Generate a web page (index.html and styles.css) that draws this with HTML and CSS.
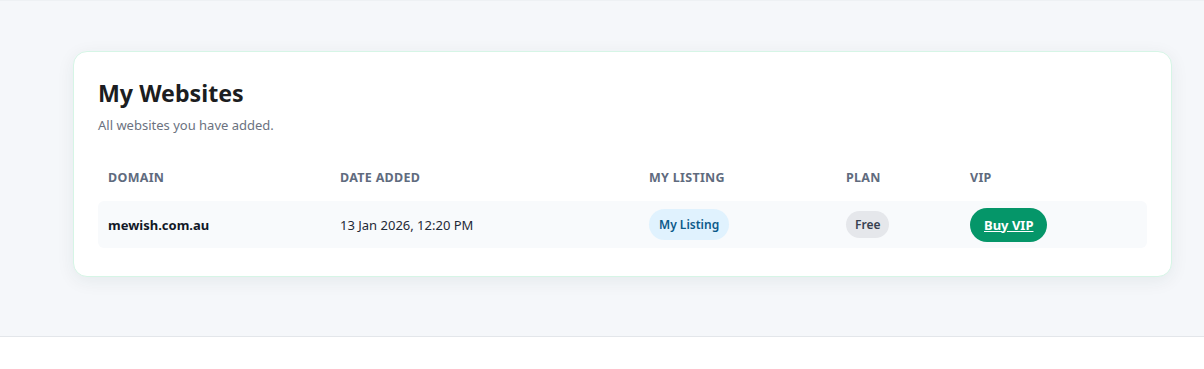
FILE: index.html
```html
<!DOCTYPE html>
<html lang="en">
<head>
    <meta charset="UTF-8">
    <meta name="viewport" content="width=device-width, initial-scale=1.0">
    <title>My Websites</title>
    <link rel="stylesheet" href="styles.css">
</head>
<body>
    <div class="page">
        <div class="card">
            <h1>My Websites</h1>
            <p class="subtitle">All websites you have added.</p>
            <table class="sites">
                <thead>
                    <tr>
                        <th class="col-domain">Domain</th>
                        <th class="col-date">Date Added</th>
                        <th class="col-listing">My Listing</th>
                        <th class="col-plan">Plan</th>
                        <th>VIP</th>
                    </tr>
                </thead>
                <tbody>
                    <tr>
                        <td class="domain">mewish.com.au</td>
                        <td>13 Jan 2026, 12:20 PM</td>
                        <td><span class="badge badge-listing">My Listing</span></td>
                        <td><span class="badge badge-plan">Free</span></td>
                        <td><a href="#" class="btn-vip">Buy VIP</a></td>
                    </tr>
                </tbody>
            </table>
        </div>
    </div>
    <div class="footer-space"></div>
</body>
</html>
```

FILE: styles.css
```css
body {
    margin: 0;
    font-family: "Segoe UI", "Noto Sans", sans-serif;
    background-color: #fff;
    color: #111827;
}
.page {
    background-color: #f5f7fa;
    border-top: 1px solid #eef1f4;
    border-bottom: 1px solid #e3e6ea;
    padding: 50px 32px 59px 73px;
}
.card {
    background-color: #fff;
    border: 1px solid #d6f5e6;
    border-radius: 14px;
    box-shadow: 0 4px 18px rgba(15, 60, 50, 0.07);
    padding: 24px 24px 28px 24px;
}
.card h1 {
    margin: 1px 0 0 0;
    font-size: 23.2px;
    line-height: 32px;
    font-weight: 700;
    color: #1c1d21;
}
.subtitle {
    margin: 7px 0 0 0;
    font-size: 13px;
    line-height: 18px;
    color: #6b7280;
}
.sites {
    width: 100%;
    border-collapse: separate;
    border-spacing: 0;
    margin-top: 25px;
}
.sites th {
    text-align: left;
    font-size: 12.5px;
    font-weight: 700;
    text-transform: uppercase;
    letter-spacing: 0.3px;
    color: #5f6b7e;
    padding: 10px 10px 15px 10px;
}
.col-domain { width: 212px; }
.col-date { width: 289px; }
.col-listing { width: 177px; }
.col-plan { width: 104px; }
.sites td {
    background-color: #f8fafc;
    font-size: 13px;
    padding: 0 10px;
    height: 47px;
    color: #1f2937;
}
.sites td:first-child {
    border-radius: 6px 0 0 6px;
}
.sites td:last-child {
    border-radius: 0 6px 6px 0;
}
.sites td.domain {
    font-weight: 700;
    color: #111827;
}
.badge {
    display: inline-block;
    border-radius: 999px;
    font-size: 12px;
    font-weight: 600;
}
.badge-listing {
    background-color: #e0f2fe;
    color: #0c5a8a;
    padding: 7px 10px;
}
.badge-plan {
    background-color: #e5e7eb;
    color: #374151;
    padding: 5px 9px;
}
.btn-vip {
    display: inline-block;
    background-color: #059669;
    color: #fff;
    font-size: 13px;
    font-weight: 700;
    text-decoration: underline;
    padding: 8px 14px;
    border-radius: 999px;
}
.footer-space {
    height: 32px;
}
```
